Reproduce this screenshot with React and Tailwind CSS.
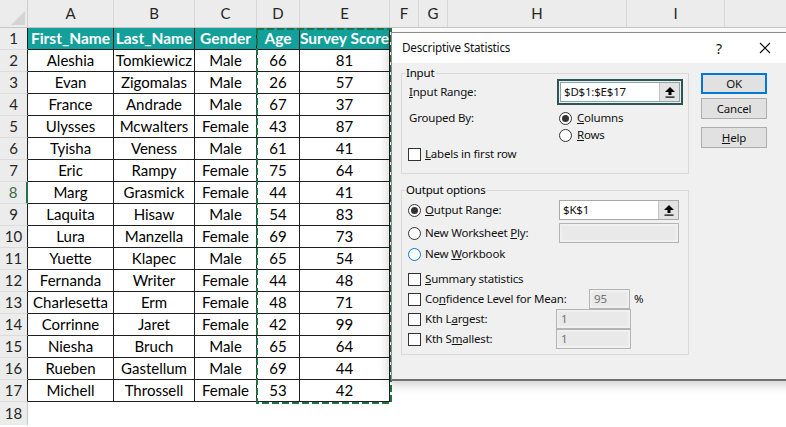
import React from "react";

const rows = [
  ["Aleshia", "Tomkiewicz", "Male", 66, 81],
  ["Evan", "Zigomalas", "Male", 26, 57],
  ["France", "Andrade", "Male", 67, 37],
  ["Ulysses", "Mcwalters", "Female", 43, 87],
  ["Tyisha", "Veness", "Male", 61, 41],
  ["Eric", "Rampy", "Female", 75, 64],
  ["Marg", "Grasmick", "Female", 44, 41],
  ["Laquita", "Hisaw", "Male", 54, 83],
  ["Lura", "Manzella", "Female", 69, 73],
  ["Yuette", "Klapec", "Male", 65, 54],
  ["Fernanda", "Writer", "Female", 44, 48],
  ["Charlesetta", "Erm", "Female", 48, 71],
  ["Corrinne", "Jaret", "Female", 42, 99],
  ["Niesha", "Bruch", "Male", 65, 64],
  ["Rueben", "Gastellum", "Male", 69, 44],
  ["Michell", "Throssell", "Female", 53, 42],
];

const colW = ["w-[86px]", "w-[81px]", "w-[62px]", "w-[43px]", "w-[90px]"];
const letters = [
  ["A", "w-[86px]"],
  ["B", "w-[81px]"],
  ["C", "w-[62px]"],
  ["D", "w-[43px]"],
  ["E", "w-[90px]"],
  ["F", "w-[29px]"],
  ["G", "w-[29px]"],
  ["H", "w-[179px]"],
  ["I", "w-[98px]"],
  ["", "w-[70px]"],
];

function ColumnHeader() {
  return (
    <div className="flex h-[28px] bg-[#ececec] border-b border-[#c6c6c6]">
      <div className="w-[28px] shrink-0 border-r border-[#d0d0d0] relative">
        <svg className="absolute left-[11px] top-[11px]" width="14" height="14" viewBox="0 0 14 14">
          <polygon points="14,0 14,14 0,14" fill="#d4d4d4" />
        </svg>
      </div>
      {letters.map(([l, w], i) => (
        <div
          key={i}
          className={`${w} shrink-0 border-r border-[#d8d8d8] flex items-center justify-center text-[15px] text-[#262626]`}
        >
          {l}
        </div>
      ))}
    </div>
  );
}

function RowHeader({ n, active }) {
  return (
    <div
      className={`w-[28px] shrink-0 bg-[#ececec] border-b border-[#dcdcdc] flex items-center justify-center text-[15px] ${
        active ? "border-r-2 border-r-[#217346] text-[#3a6b4d] bg-[#e2e2e2]" : "border-r border-r-[#1f1f1f] text-[#262626]"
      }`}
    >
      {n}
    </div>
  );
}

function Sheet() {
  return (
    <div className="font-['Lato',sans-serif]">
      <ColumnHeader />
      <div className="flex h-[22px]">
        <RowHeader n={1} />
        {["First_Name", "Last_Name", "Gender", "Age", "Survey Score"].map((h, i) => (
          <div
            key={i}
            className={`${colW[i]} shrink-0 bg-[#13a09a] text-white font-bold text-[15.5px] border-r border-b border-[#1f1f1f] flex items-center justify-center whitespace-nowrap overflow-hidden`}
          >
            {h}
          </div>
        ))}
      </div>
      {rows.map((r, ri) => (
        <div key={ri} className="flex h-[22px]">
          <RowHeader n={ri + 2} active={ri + 2 === 8} />
          {r.map((c, ci) => (
            <div
              key={ci}
              className={`${colW[ci]} shrink-0 text-[15px] text-black border-r border-b border-[#1f1f1f] flex items-center justify-center whitespace-nowrap overflow-hidden`}
            >
              {c}
            </div>
          ))}
        </div>
      ))}
      <div className="flex h-[23px]">
        <div className="w-[28px] shrink-0 bg-[#ececec] border-r border-[#c6c6c6] flex items-center justify-center text-[15px] text-[#262626]">
          18
        </div>
      </div>
    </div>
  );
}

function UpArrow() {
  return (
    <svg width="10" height="11" viewBox="0 0 10 11">
      <polygon points="5,0 10,5 0,5" fill="#000" />
      <rect x="3.5" y="4" width="3" height="4" fill="#000" />
      <rect x="0.5" y="9.5" width="9" height="1.2" fill="#000" />
    </svg>
  );
}

function Radio({ checked, focus }) {
  return (
    <div
      className={`w-[13px] h-[13px] rounded-full bg-white border flex items-center justify-center shrink-0 ${
        focus ? "border-[#0078d7]" : "border-[#333333]"
      }`}
    >
      {checked && <div className="w-[7px] h-[7px] rounded-full bg-[#333333]" />}
    </div>
  );
}

function Check() {
  return <div className="w-[13px] h-[13px] bg-white border border-[#333333] shrink-0" />;
}

function DisabledBox({ w, value }) {
  return (
    <div className={`${w} h-[20px] border border-[#b4b4b4] p-[2px] shrink-0`}>
      <div className="w-full h-full bg-[#e9e9e9] text-[#707070] text-[11.5px] leading-[14px] pl-[2px]">{value}</div>
    </div>
  );
}

function GroupBox({ label, h, mt, children }) {
  return (
    <div className={`relative border border-[#d9d9d9] ${h} ${mt}`}>
      <span className="absolute -top-[9px] left-[3px] px-[1px] bg-[#f0f0f0] leading-[16px] text-black">
        {label}
      </span>
      {children}
    </div>
  );
}

function Dialog() {
  return (
    <div className="absolute left-[391px] top-[32px] w-[430px] h-[349px] bg-[#f0f0f0] border border-[#8c8c8c] border-b-2 border-b-[#6f6f6f] shadow-[-3px_4px_10px_rgba(0,0,0,0.18)] font-['Noto_Sans',sans-serif] text-[11.5px] tracking-[-0.2px] text-[#111]">
      <div className="h-[30px] bg-white flex items-center">
        <div className="w-[316px] pl-[10px] text-[11.7px]">Descriptive Statistics</div>
        <div className="w-[22px] text-center text-[14px]">?</div>
        <div className="ml-[23px] w-[24px] flex justify-center">
          <svg width="12" height="12" viewBox="0 0 12 12">
            <path d="M1 1 L11 11 M11 1 L1 11" stroke="#000" strokeWidth="1.1" />
          </svg>
        </div>
      </div>
      <div className="flex pl-[9px]">
        <div className="w-[288px]">
          <GroupBox label="Input" h="h-[101px]" mt="mt-[10px]">
            <div className="mt-[5px] h-[26px] flex items-center">
              <div className="w-[155px] pl-[7px]">
                <u>I</u>nput Range:
              </div>
              <div className="w-[126px] h-[26px] border-2 border-[#2a5656] p-[1px] shrink-0">
                <div className="w-full h-full bg-white border border-[#8aa3a3] flex items-center">
                  <div className="flex-1 pl-[3px]">$D$1:$E$17</div>
                  <div className="w-[20px] h-full bg-[#e3e3e3] border-l border-[#c4c4c4] flex items-center justify-center">
                    <UpArrow />
                  </div>
                </div>
              </div>
            </div>
            <div className="mt-[5px] h-[16px] flex items-center">
              <div className="w-[157px] pl-[7px]">Grouped By:</div>
              <Radio checked />
              <span className="ml-[5px]">
                <u>C</u>olumns
              </span>
            </div>
            <div className="mt-[1px] h-[16px] flex items-center">
              <div className="w-[157px]" />
              <Radio />
              <span className="ml-[5px]">
                <u>R</u>ows
              </span>
            </div>
            <div className="mt-[3px] h-[16px] flex items-center pl-[6px]">
              <Check />
              <span className="ml-[4px]">
                <u>L</u>abels in first row
              </span>
            </div>
          </GroupBox>
          <GroupBox label="Output options" h="h-[165px]" mt="mt-[16px]">
            <div className="mt-[9px] h-[20px] flex items-center">
              <div className="w-[157px] pl-[6px] flex items-center">
                <Radio checked />
                <span className="ml-[4px]">
                  <u>O</u>utput Range:
                </span>
              </div>
              <div className="w-[120px] h-[20px] border border-[#a8a8a8] bg-white flex items-center shrink-0">
                <div className="flex-1 pl-[3px]">$K$1</div>
                <div className="w-[20px] h-full bg-[#e3e3e3] border-l border-[#c4c4c4] flex items-center justify-center">
                  <UpArrow />
                </div>
              </div>
            </div>
            <div className="mt-[3px] h-[20px] flex items-center">
              <div className="w-[157px] pl-[6px] flex items-center">
                <Radio />
                <span className="ml-[4px]">
                  New Worksheet <u>P</u>ly:
                </span>
              </div>
              <DisabledBox w="w-[120px]" value="" />
            </div>
            <div className="mt-[3px] h-[16px] flex items-center pl-[6px]">
              <Radio focus />
              <span className="ml-[4px]">
                New <u>W</u>orkbook
              </span>
            </div>
            <div className="mt-[9px] h-[16px] flex items-center pl-[6px]">
              <Check />
              <span className="ml-[4px]">
                <u>S</u>ummary statistics
              </span>
            </div>
            <div className="mt-[2px] h-[20px] flex items-center">
              <div className="w-[187px] pl-[6px] flex items-center">
                <Check />
                <span className="ml-[4px]">
                  Co<u>n</u>fidence Level for Mean:
                </span>
              </div>
              <DisabledBox w="w-[41px]" value="95" />
              <span className="ml-[4px]">%</span>
            </div>
            <div className="h-[20px] flex items-center">
              <div className="w-[154px] pl-[6px] flex items-center">
                <Check />
                <span className="ml-[4px]">
                  Kth L<u>a</u>rgest:
                </span>
              </div>
              <DisabledBox w="w-[75px]" value="1" />
            </div>
            <div className="h-[20px] flex items-center">
              <div className="w-[154px] pl-[6px] flex items-center">
                <Check />
                <span className="ml-[4px]">
                  Kth S<u>m</u>allest:
                </span>
              </div>
              <DisabledBox w="w-[75px]" value="1" />
            </div>
          </GroupBox>
        </div>
        <div className="ml-[12px] w-[66px] flex flex-col">
          <div className="mt-[10px] h-[21px] border-2 border-[#0078d7] bg-[#e1e1e1] flex items-center justify-center">
            OK
          </div>
          <div className="mt-[4px] h-[21px] border border-[#adadad] bg-[#e1e1e1] flex items-center justify-center">
            Cancel
          </div>
          <div className="mt-[8px] h-[21px] border border-[#adadad] bg-[#e1e1e1] flex items-center justify-center">
            <span>
              <u>H</u>elp
            </span>
          </div>
        </div>
      </div>
    </div>
  );
}

export default function App() {
  return (
    <div className="relative w-[786px] h-[427px] overflow-hidden bg-white">
      <Sheet />
      <svg className="absolute left-[256px] top-[28px]" width="136" height="376" viewBox="0 0 136 376">
        <rect x="1" y="1" width="134" height="374" fill="none" stroke="#217346" strokeWidth="2" strokeDasharray="7 3" />
      </svg>
      <Dialog />
    </div>
  );
}
